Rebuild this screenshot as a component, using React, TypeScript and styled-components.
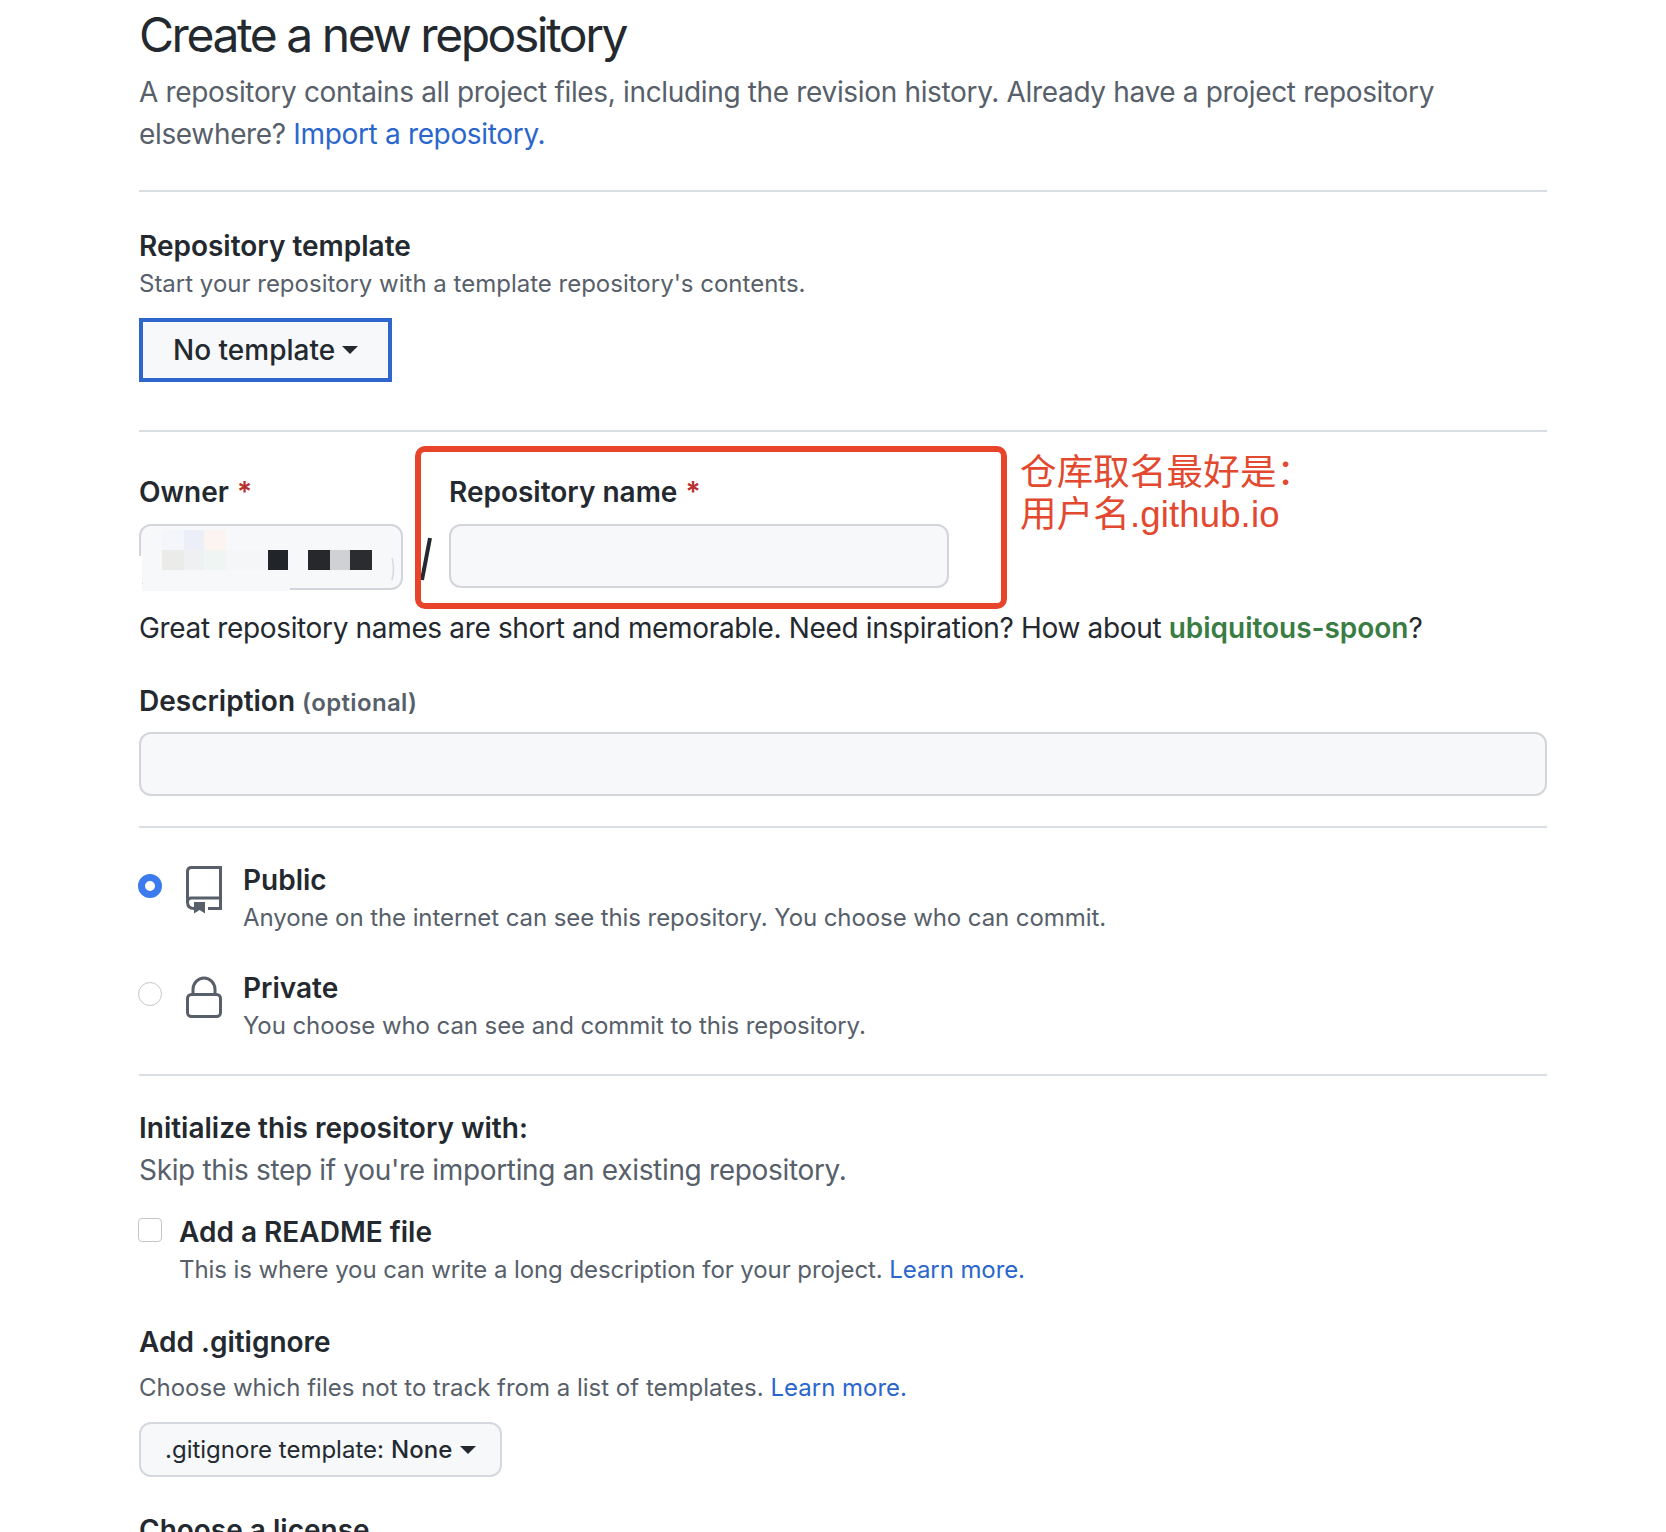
import styled, { createGlobalStyle } from 'styled-components';

const GlobalStyle = createGlobalStyle`
  html, body {
    margin: 0;
    height: 1532px;
    overflow: hidden;
    background: #fff;
  }
  body {
    font-family: Inter, "Liberation Sans", "Noto Sans CJK SC", sans-serif;
    color: #24292f;
  }
`;

const Page = styled.main`
  width: 1408px;
  margin-left: 139px;
`;

const Title = styled.h1`
  margin: 0;
  font-size: 48px;
  line-height: 70px;
  font-weight: 400;
  letter-spacing: -2.45px;
`;

const Intro = styled.p`
  margin: 1px 0 0;
  font-size: 28px;
  line-height: 42px;
  letter-spacing: -0.34px;
  color: #57606a;
`;

const Link = styled.a`
  color: #2a66cc;
`;

const Divider = styled.hr<{ $top: number }>`
  height: 2px;
  margin: ${p => p.$top}px 0 0;
  border: 0;
  background: #d8dee4;
`;

const Label = styled.div<{ $top?: number }>`
  margin-top: ${p => p.$top ?? 0}px;
  font-size: 28px;
  line-height: 40px;
  font-weight: 600;
`;

const Required = styled.span`
  margin-left: 1px;
  color: #b8312f;
`;

const Optional = styled.span`
  font-size: 24px;
  line-height: 1;
  letter-spacing: 0.35px;
  color: #57606a;
`;

const Hint = styled.div<{ $top?: number; $tight?: boolean }>`
  margin-top: ${p => p.$top ?? 0}px;
  font-size: 24px;
  line-height: 36px;
  letter-spacing: ${p => (p.$tight ? '-0.085px' : '0')};
  color: #57606a;
`;

const Lead = styled.div`
  margin-top: 2px;
  font-size: 28px;
  line-height: 40px;
  letter-spacing: -0.33px;
  color: #57606a;
`;

const SelectButton = styled.button<{ $focused?: boolean }>`
  display: flex;
  align-items: center;
  gap: ${p => (p.$focused ? 7 : 8)}px;
  box-sizing: border-box;
  margin-top: 16px;
  height: ${p => (p.$focused ? 64 : 55)}px;
  padding: 0 ${p => (p.$focused ? 30 : 24)}px;
  border: ${p => (p.$focused ? '4px solid #2f66cc' : '2px solid #d5d8dc')};
  border-radius: ${p => (p.$focused ? 0 : 12)}px;
  background: #f6f8fa;
  color: #24292f;
  font: ${p => (p.$focused ? 500 : 400)} ${p => (p.$focused ? 28 : 24)}px Inter, sans-serif;
`;

const Caret = styled.span`
  width: 0;
  height: 0;
  border-top: 8px solid #24292f;
  border-left: 8px solid transparent;
  border-right: 8px solid transparent;
`;

const Strong = styled.span`
  font-weight: 500;
  margin-left: 0.3em;
`;

const NameRow = styled.div`
  display: flex;
  align-items: flex-start;
  position: relative;
  margin-top: 40px;
`;

const Field = styled.div`
  display: flex;
  flex-direction: column;
  gap: 12px;
`;

const Input = styled.div<{ $width?: number; $top?: number }>`
  box-sizing: border-box;
  width: ${p => (p.$width ? `${p.$width}px` : '100%')};
  height: 64px;
  margin-top: ${p => p.$top ?? 0}px;
  border: 2px solid #d3d5da;
  border-radius: 12px;
  background: #f6f8fa;
`;

const OwnerInput = styled(Input)`
  position: relative;
  height: 66px;
  margin-bottom: -2px;
`;

const Mosaic = styled.svg`
  position: absolute;
  left: -2px;
  top: -2px;
  overflow: visible;
`;

const Slash = styled.svg`
  margin: 65px 17px 0 17px;
  flex: none;
`;

const Callout = styled.div`
  position: absolute;
  left: 276px;
  top: -26px;
  box-sizing: border-box;
  width: 592px;
  height: 163px;
  border: 6px solid #e8442a;
  border-radius: 10px;
`;

const CalloutNote = styled.div`
  position: absolute;
  left: 881px;
  top: -20px;
  font-family: "Liberation Sans", "Noto Sans CJK SC", sans-serif;
  font-size: 36.5px;
  line-height: 42px;
  letter-spacing: 0.15px;
  color: #e2492f;
  white-space: nowrap;
`;

const BodyLine = styled.div`
  margin-top: 20px;
  font-size: 28px;
  line-height: 40px;
  letter-spacing: -0.345px;
`;

const Suggestion = styled.span`
  color: #3a7d44;
  font-weight: 600;
  letter-spacing: -0.03px;
`;

const Option = styled.div<{ $top: number }>`
  display: grid;
  grid-template-columns: 47px 57px 1fr;
  margin-top: ${p => p.$top}px;
`;

const Radio = styled.span<{ $checked?: boolean }>`
  box-sizing: border-box;
  width: 24px;
  height: 24px;
  margin: 14px 0 0 -1px;
  border-radius: 50%;
  background: #fff;
  border: ${p => (p.$checked ? '7px solid #3b7bee' : '1.5px solid #c4c6c8')};
`;

const OptionIcon = styled.svg<{ $top: number }>`
  display: block;
  margin-top: ${p => p.$top}px;
`;

const Checkbox = styled.span`
  box-sizing: border-box;
  width: 24px;
  height: 24px;
  margin: 6px 0 0 -1px;
  border: 1.5px solid #c4c6c8;
  border-radius: 4px;
  background: #fff;
`;

const CheckRow = styled.div`
  display: grid;
  grid-template-columns: 40px 1fr;
  margin-top: 22px;
`;

const Clipped = styled(Label)`
  white-space: nowrap;
`;

function RepoIcon() {
  return (
    <OptionIcon $top={6} width="36" height="48" viewBox="0 0 36 48" fill="none" stroke="#57606a" strokeWidth="3">
      <path d="M1.5 36V5.5Q1.5 1.5 5.5 1.5H34.5V42.5H22" />
      <path d="M1.5 36Q1.5 32 5.5 32H34.5" />
      <path d="M1.5 36Q1.5 42.5 8 42.5H9" />
      <path d="M8 36H19V47.5L13.5 44L8 47.5Z" fill="#57606a" stroke="none" />
    </OptionIcon>
  );
}

function LockIcon() {
  return (
    <OptionIcon $top={8} width="36" height="42" viewBox="0 0 36 42" fill="none" stroke="#57606a" strokeWidth="3">
      <path d="M7 18V13.5A11 11.5 0 0 1 29 13.5V18" />
      <rect x="1.5" y="18.5" width="33" height="22" rx="4" />
    </OptionIcon>
  );
}

// the blurred-out account name: soft patches wiping the border, then the pixel blocks
function OwnerMosaic() {
  return (
    <Mosaic width="264" height="66" viewBox="0 0 264 66">
      <rect x="-1" y="32" width="4" height="36" fill="#fff" />
      <rect x="3" y="60" width="148" height="7" fill="#f6f8fa" />
      <rect x="23" y="6" width="22" height="20" fill="#f5f6fb" />
      <rect x="45" y="6" width="20" height="20" fill="#eceff8" />
      <rect x="65" y="6" width="22" height="20" fill="#fbf4f1" />
      <rect x="23" y="26" width="22" height="20" fill="#ebebe9" />
      <rect x="45" y="26" width="20" height="20" fill="#eef0f2" />
      <rect x="65" y="26" width="22" height="20" fill="#eef5f3" />
      <rect x="87" y="26" width="42" height="20" fill="#f4f6f8" />
      <rect x="129" y="26" width="20" height="20" fill="#212428" />
      <rect x="169" y="26" width="22" height="20" fill="#26282c" />
      <rect x="191" y="26" width="20" height="20" fill="#d0d1d4" />
      <rect x="211" y="26" width="22" height="20" fill="#2a2c2f" />
      <path d="M253 34Q256 45 253 56" stroke="#d8d9dc" strokeWidth="1.5" fill="none" />
    </Mosaic>
  );
}

export default function App() {
  return (
    <Page>
      <GlobalStyle />
      <Title>Create a new repository</Title>
      <Intro>
        A repository contains all project files, including the revision history. Already have a project repository
        elsewhere? <Link>Import a repository.</Link>
      </Intro>
      <Divider $top={35} />

      <Label $top={34}>Repository template</Label>
      <Hint>Start your repository with a template repository's contents.</Hint>
      <SelectButton $focused>
        No template <Caret />
      </SelectButton>
      <Divider $top={48} />

      <NameRow>
        <Field>
          <Label>
            Owner <Required>*</Required>
          </Label>
          <OwnerInput $width={264}>
            <OwnerMosaic />
          </OwnerInput>
        </Field>
        <Slash width="12" height="44" viewBox="0 0 12 44">
          <path d="M10 1L2 43" stroke="#24292f" strokeWidth="4" />
        </Slash>
        <Field>
          <Label>
            Repository name <Required>*</Required>
          </Label>
          <Input $width={500} />
        </Field>
        <Callout />
        <CalloutNote>
          仓库取名最好是：
          <br />
          用户名.github.io
        </CalloutNote>
      </NameRow>

      <BodyLine>
        Great repository names are short and memorable. Need inspiration? How about{' '}
        <Suggestion>ubiquitous-spoon</Suggestion>?
      </BodyLine>

      <Label $top={33}>
        Description <Optional>(optional)</Optional>
      </Label>
      <Input $top={11} />
      <Divider $top={30} />

      <Option $top={32}>
        <Radio $checked />
        <RepoIcon />
        <div>
          <Label>Public</Label>
          <Hint $tight>Anyone on the internet can see this repository. You choose who can commit.</Hint>
        </div>
      </Option>
      <Option $top={32}>
        <Radio />
        <LockIcon />
        <div>
          <Label>Private</Label>
          <Hint $tight>You choose who can see and commit to this repository.</Hint>
        </div>
      </Option>
      <Divider $top={30} />

      <Label $top={32}>Initialize this repository with:</Label>
      <Lead>Skip this step if you're importing an existing repository.</Lead>
      <CheckRow>
        <Checkbox />
        <div>
          <Label>Add a README file</Label>
          <Hint $tight>
            This is where you can write a long description for your project. <Link>Learn more.</Link>
          </Hint>
        </div>
      </CheckRow>

      <Label $top={34}>Add .gitignore</Label>
      <Hint $top={8}>
        Choose which files not to track from a list of templates. <Link>Learn more.</Link>
      </Hint>
      <SelectButton>
        <span>
          .gitignore template:<Strong>None</Strong>
        </span>
        <Caret />
      </SelectButton>

      <Clipped $top={33}>Choose a license</Clipped>
    </Page>
  );
}
